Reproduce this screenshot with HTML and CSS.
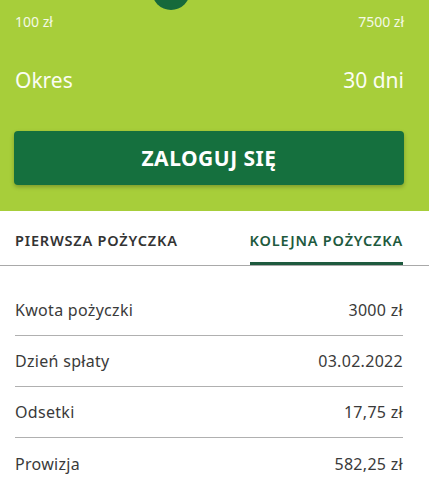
FILE: index.html
```html
<!DOCTYPE html>
<html lang="pl">
<head>
<meta charset="utf-8">
<link rel="stylesheet" href="styles.css">
</head>
<body>
<section class="hero">
  <div class="slider">
    <span class="thumb"></span>
    <div class="range">
      <span>100 zł</span>
      <span>7500 zł</span>
    </div>
  </div>
  <div class="period">
    <span>Okres</span>
    <span>30 dni</span>
  </div>
  <button class="login">ZALOGUJ SIĘ</button>
</section>
<nav class="tabs">
  <div class="tab">PIERWSZA POŻYCZKA</div>
  <div class="tab active">KOLEJNA POŻYCZKA</div>
</nav>
<ul class="details">
  <li><span>Kwota pożyczki</span><span>3000 zł</span></li>
  <li><span>Dzień spłaty</span><span>03.02.2022</span></li>
  <li><span>Odsetki</span><span>17,75 zł</span></li>
  <li><span>Prowizja</span><span>582,25 zł</span></li>
</ul>
</body>
</html>
```
FILE: styles.css
```css
* { box-sizing: border-box; }
html, body { margin: 0; padding: 0; }
body {
  width: 429px;
  height: 480px;
  overflow: hidden;
  background: #fff;
  font-family: "Noto Sans", "Open Sans", sans-serif;
  color: #333;
}
.hero {
  background: #a7ce3a;
  height: 211px;
  padding: 0 25px 0 14px;
  display: flex;
  flex-direction: column;
}
.slider {
  position: relative;
  height: 48px;
}
.thumb {
  position: absolute;
  left: 138px;
  top: -28px;
  width: 38px;
  height: 38px;
  border-radius: 50%;
  background: #16693b;
}
.range {
  display: flex;
  justify-content: space-between;
  padding: 12px 0 0 1px;
  font-size: 14px;
  color: #f4f9e6;
}
.period {
  display: flex;
  justify-content: space-between;
  align-items: center;
  height: 64px;
  padding-left: 1px;
  font-size: 21px;
  color: #fbfdf3;
}
.login {
  margin-top: 19px;
  height: 54px;
  width: 390px;
  border: 0;
  border-radius: 4px;
  background: #15703e;
  box-shadow: 0 2px 4px rgba(0,0,0,0.25);
  color: #fff;
  font-family: "Noto Sans", "Open Sans", sans-serif;
  font-weight: 700;
  font-size: 21px;
  letter-spacing: 0.5px;
}
.tabs {
  display: flex;
  justify-content: space-between;
  height: 55px;
  padding: 0 26px 0 15px;
  border-bottom: 1px solid #a9a9a9;
}
.tab {
  display: flex;
  align-items: center;
  height: 54px;
  font-size: 14.5px;
  font-weight: 600;
  letter-spacing: 0.8px;
  color: #333;
  padding-top: 4px;
}
.tab.active {
  color: #1e5a3e;
  border-bottom: 3px solid #1e5a3e;
  height: 54px;
  padding-top: 7px;
}
.details {
  list-style: none;
  margin: 0;
  padding: 19px 26px 0 15px;
}
.details li {
  display: flex;
  justify-content: space-between;
  align-items: center;
  height: 51px;
  border-bottom: 1px solid #b0b0b0;
  font-size: 16px;
  color: #3a3a3a;
  letter-spacing: 0.3px;
}
.details li:last-child { border-bottom: 0; }
```
